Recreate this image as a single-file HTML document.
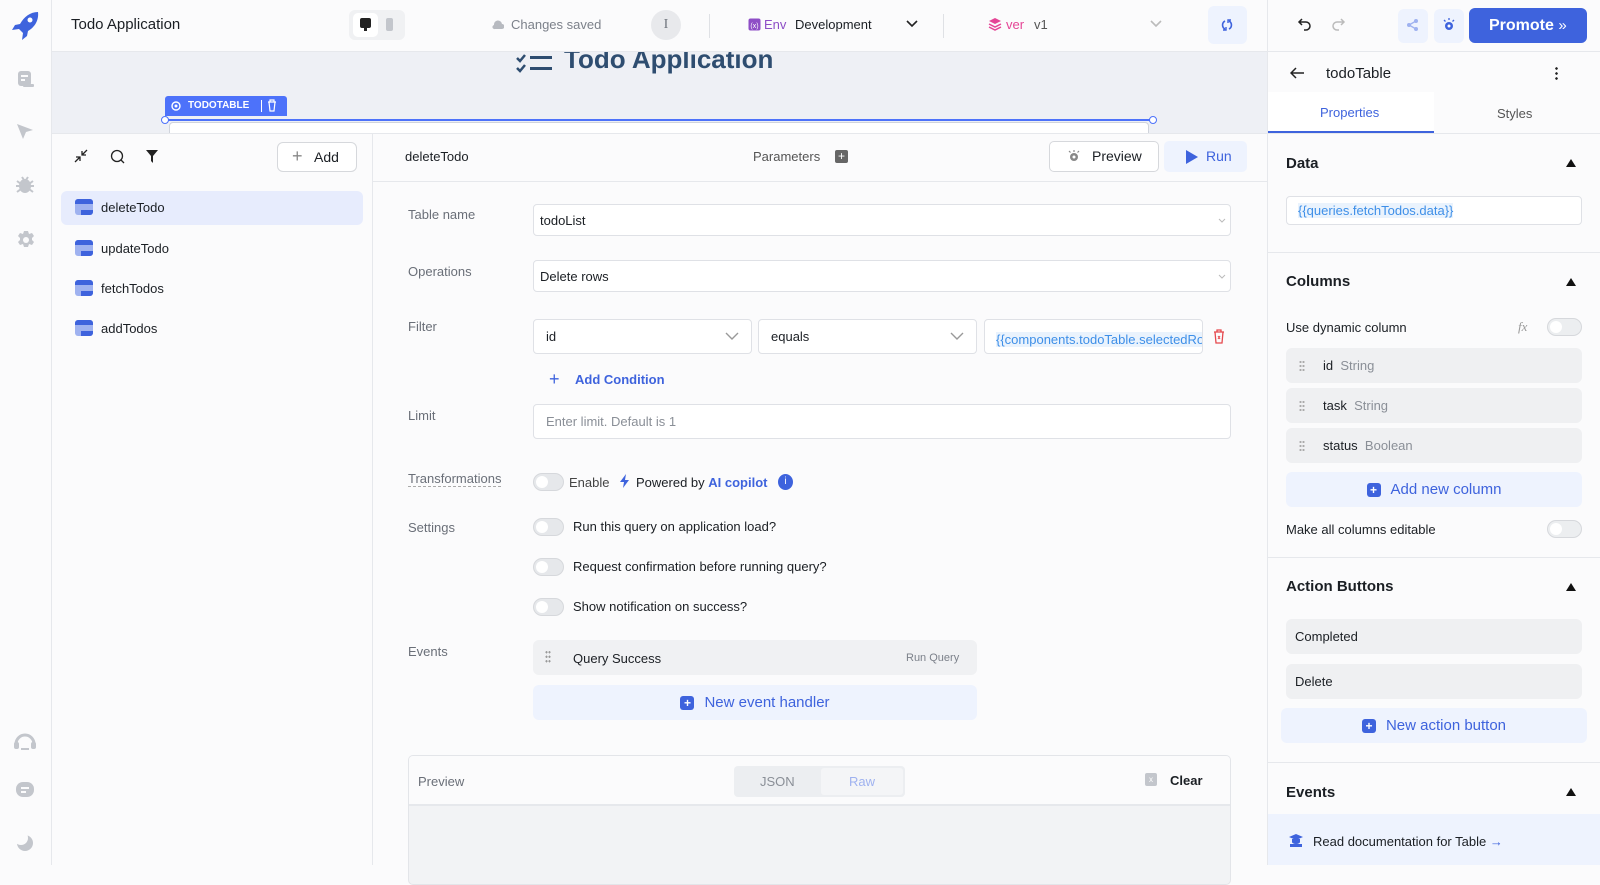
<!DOCTYPE html>
<html><head><meta charset="utf-8"><style>
*{box-sizing:border-box;margin:0;padding:0}
body{width:1600px;height:865px;overflow:hidden;background:#fbfbfc;font-family:"Liberation Sans",sans-serif;color:#1b1f24;position:relative;font-size:13px}
.a{position:absolute}
.lbl{position:absolute;left:408px;color:#6a6f78;font-size:13px}
.inp{position:absolute;background:#fff;border:1px solid #dfe1e6;border-radius:4px;font-size:13px;padding-left:6px;display:flex;align-items:center;color:#1b1f24}
.tog{position:absolute;width:31px;height:18px;border-radius:9px;background:#e6e8eb;border:1px solid #d6d8dc}
.tog:after{content:"";position:absolute;left:2px;top:2px;width:12px;height:12px;border-radius:50%;background:#fff}
.ttl{position:absolute;left:1286px;font-size:15px;font-weight:bold;color:#1b1f24}
.tri{position:absolute;left:1566px;width:0;height:0;border-left:5px solid transparent;border-right:5px solid transparent;border-bottom:8px solid #111}
.hr{position:absolute;left:1267px;width:333px;height:1px;background:#e6e8ec}
.row{position:absolute;left:1286px;width:296px;height:35px;background:#eff0f2;border-radius:6px;font-size:13px;display:flex;align-items:center}
.bluebtn{position:absolute;background:#eef3fe;border-radius:6px;color:#3e63dd;font-size:15px;display:flex;align-items:center;justify-content:center;gap:10px}
.pl{width:14px;height:14px;background:#3e63dd;border-radius:3px;color:#fff;font-size:12px;line-height:14px;text-align:center;font-weight:bold}
.qi{position:absolute;left:75px;width:18px;height:16px;border-radius:3px;background:#9fb2f0;overflow:hidden}
.qi:before{content:"";position:absolute;left:0;top:0;width:18px;height:5px;background:#3e63dd}
.qi:after{content:"";position:absolute;right:0;bottom:0;width:12px;height:5px;background:#3e63dd}
.qt{position:absolute;left:101px;font-size:13px;color:#1b1f24}
</style></head><body>
<!-- left sidebar -->
<div class="a" style="left:0;top:0;width:52px;height:865px;border-right:1px solid #e6e8ec;background:#fbfbfc"></div>
<svg class="a" style="left:10px;top:9px" width="32" height="32" viewBox="0 0 32 32"><path d="M28 3 C20 3 14 8 10 15 L5 16 L2 21 L9 20 L13 24 L12 31 L17 27 L18 22 C25 18 29 11 28 3Z" fill="#3e63dd"/><circle cx="20" cy="11" r="2.5" fill="#fff"/></svg>
<svg class="a" style="left:17px;top:70px" width="18" height="18"><rect x="1" y="1" width="13" height="15" rx="3" fill="#c3c6cc"/><rect x="4" y="5" width="7" height="2" fill="#fbfbfc"/><rect x="4" y="9" width="4" height="2" fill="#fbfbfc"/><rect x="6" y="14" width="11" height="3" rx="1" fill="#c3c6cc"/></svg>
<svg class="a" style="left:16px;top:122px" width="18" height="18"><path d="M1 2 L17 8 L10 10 L7 17Z" fill="#c3c6cc"/></svg>
<svg class="a" style="left:15px;top:175px" width="20" height="20"><ellipse cx="10" cy="11" rx="6" ry="7" fill="#c3c6cc"/><path d="M2 6l4 3M18 6l-4 3M1 11h4M19 11h-4M2 17l4-3M18 17l-4-3M7 2l2 3M13 2l-2 3" stroke="#c3c6cc" stroke-width="2"/></svg>
<svg class="a" style="left:16px;top:230px" width="20" height="20" viewBox="0 0 20 20"><path d="M8 1h4l1 3 3-1 2 3-2 2 0 2 2 2-2 3-3-1-1 3H8l-1-3-3 1-2-3 2-2v-2L2 6l2-3 3 1z" fill="#c3c6cc"/><circle cx="10" cy="10" r="3" fill="#fbfbfc"/></svg>
<svg class="a" style="left:13px;top:730px" width="24" height="22"><path d="M3 14 A9 9 0 0 1 21 14" stroke="#c3c6cc" stroke-width="3" fill="none"/><rect x="1" y="12" width="5" height="7" rx="2" fill="#c3c6cc"/><rect x="18" y="12" width="5" height="7" rx="2" fill="#c3c6cc"/><path d="M8 19h8" stroke="#c3c6cc" stroke-width="2"/></svg>
<svg class="a" style="left:15px;top:781px" width="20" height="18"><rect x="1" y="1" width="18" height="15" rx="7" fill="#c3c6cc"/><rect x="6" y="6" width="8" height="2" fill="#fbfbfc"/><rect x="6" y="10" width="5" height="2" fill="#fbfbfc"/></svg>
<svg class="a" style="left:15px;top:833px" width="20" height="20"><circle cx="10" cy="10" r="8" fill="#c3c6cc"/><circle cx="6" cy="5" r="7" fill="#fbfbfc"/></svg>

<!-- header -->
<div class="a" style="left:52px;top:0;width:1548px;height:52px;background:#fbfbfc;border-bottom:1px solid #e6e8ec"></div>
<div class="a" style="left:71px;top:16px;font-size:15px">Todo Application</div>
<div class="a" style="left:349px;top:10px;width:56px;height:30px;background:#f0f1f3;border-radius:6px"></div>
<div class="a" style="left:353px;top:13px;width:25px;height:24px;background:#fff;border-radius:5px"></div>
<svg class="a" style="left:359px;top:17px" width="14" height="16"><rect x="1" y="1" width="11" height="10" rx="2" fill="#222"/><rect x="5" y="11" width="3" height="3" fill="#222"/></svg>
<div class="a" style="left:386px;top:18px;width:7px;height:13px;background:#c3c6cc;border-radius:2px"></div>
<svg class="a" style="left:492px;top:19px" width="12" height="11"><path d="M3 10h7a2.5 2.5 0 0 0 0-5A4 4 0 0 0 2 6a2 2 0 0 0 1 4z" fill="#b7bac0"/></svg>
<div class="a" style="left:511px;top:17px;font-size:13px;color:#7c818a">Changes saved</div>
<div class="a" style="left:651px;top:10px;width:30px;height:30px;border-radius:50%;background:#e8e9ec;color:#6f747c;text-align:center;line-height:30px;font-size:14px;font-family:'Liberation Serif',serif">I</div>
<div class="a" style="left:709px;top:14px;width:1px;height:24px;background:#dfe1e5"></div>
<svg class="a" style="left:748px;top:18px" width="13" height="13"><rect x="0.5" y="0.5" width="12" height="12" rx="2" fill="#8e4ec6"/><text x="6.5" y="10" font-size="7" fill="#fff" text-anchor="middle" font-family="Liberation Sans">(x)</text></svg>
<div class="a" style="left:764px;top:17px;font-size:13px;color:#8e4ec6">Env</div>
<div class="a" style="left:795px;top:17px;font-size:13px;color:#1b1f24">Development</div>
<svg class="a" style="left:905px;top:19px" width="14" height="10"><path d="M2 2l5 5 5-5" stroke="#222" stroke-width="1.6" fill="none"/></svg>
<div class="a" style="left:943px;top:14px;width:1px;height:24px;background:#dfe1e5"></div>
<svg class="a" style="left:988px;top:17px" width="14" height="15"><path d="M7 1l6 3-6 3-6-3z" fill="#e54596"/><path d="M1 7l6 3 6-3M1 10l6 3 6-3" stroke="#e54596" stroke-width="1.5" fill="none"/></svg>
<div class="a" style="left:1006px;top:17px;font-size:13px;color:#e54596">ver</div>
<div class="a" style="left:1034px;top:17px;font-size:13px;color:#555">v1</div>
<svg class="a" style="left:1149px;top:19px" width="14" height="10"><path d="M2 2l5 5 5-5" stroke="#bbb" stroke-width="1.6" fill="none"/></svg>
<div class="a" style="left:1208px;top:6px;width:39px;height:38px;background:#eef3fe;border-radius:6px"></div>
<svg class="a" style="left:1220px;top:18px" width="14" height="14"><path d="M5 3 A4.5 4.5 0 0 0 5 11M9 3A4.5 4.5 0 0 1 9 11" stroke="#3e63dd" stroke-width="1.6" fill="none"/><path d="M3 12h3v-3M11 2H8v3" stroke="#3e63dd" stroke-width="1.4" fill="none"/></svg>
<div class="a" style="left:1267px;top:0;width:1px;height:865px;background:#e6e8ec"></div>
<svg class="a" style="left:1297px;top:17px" width="16" height="14"><path d="M5 2L2 5l3 3M2 5h7a4 4 0 0 1 0 8H7" stroke="#222" stroke-width="1.5" fill="none"/></svg>
<svg class="a" style="left:1330px;top:17px" width="16" height="14"><path d="M11 2l3 3-3 3M14 5H7a4 4 0 0 0 0 8h2" stroke="#bbb" stroke-width="1.5" fill="none"/></svg>
<div class="a" style="left:1398px;top:9px;width:30px;height:34px;background:#eef3fe;border-radius:6px"></div>
<svg class="a" style="left:1406px;top:18px" width="14" height="14"><circle cx="10" cy="3" r="2" fill="#9fb2f0"/><circle cx="3" cy="7" r="2" fill="#9fb2f0"/><circle cx="10" cy="11" r="2" fill="#9fb2f0"/><path d="M10 3L3 7l7 4" stroke="#9fb2f0" stroke-width="1.3" fill="none"/></svg>
<div class="a" style="left:1434px;top:9px;width:30px;height:34px;background:#eef3fe;border-radius:6px"></div>
<svg class="a" style="left:1442px;top:17px" width="14" height="14"><circle cx="7" cy="9" r="4" fill="#3e63dd"/><circle cx="7" cy="9" r="1.5" fill="#fff"/><path d="M7 1v2M2 3l1.5 1.5M12 3l-1.5 1.5" stroke="#3e63dd" stroke-width="1.3"/></svg>
<div class="a" style="left:1469px;top:8px;width:118px;height:35px;background:#3e63dd;border-radius:6px;color:#fff;font-weight:bold;font-size:16px;line-height:35px;padding-left:20px">Promote <span style="font-weight:normal;font-size:15px">»</span></div>

<!-- canvas -->
<div class="a" style="left:52px;top:52px;width:1215px;height:81px;background:#eef0f5;overflow:hidden">
  <svg class="a" style="left:463px;top:0px" width="40" height="24"><path d="M2 6l3 3 5-6M2 16l3 3 5-6" stroke="#2e4d70" stroke-width="2.5" fill="none"/><rect x="15" y="4" width="22" height="3" fill="#2e4d70"/><rect x="15" y="15" width="22" height="3" fill="#2e4d70"/></svg>
  <div class="a" style="left:512px;top:-8px;font-size:26px;font-weight:bold;color:#2e4d70">Todo Application</div>
  <div class="a" style="left:113px;top:44px;width:122px;height:20px;background:#4d72fa;border-radius:3px 3px 0 0;color:#fff;font-size:10px;font-weight:bold;line-height:20px;padding-left:23px">TODOTABLE</div>
  <svg class="a" style="left:118px;top:48px" width="12" height="12"><circle cx="6" cy="6" r="4" stroke="#fff" stroke-width="1.4" fill="none"/><circle cx="6" cy="6" r="1.5" fill="#fff"/></svg>
  <div class="a" style="left:209px;top:48px;width:1px;height:12px;background:#fff"></div>
  <svg class="a" style="left:215px;top:47px" width="10" height="13"><path d="M1 3h8M3 3V1h4v2M2 3l1 9h4l1-9" stroke="#fff" stroke-width="1.2" fill="none"/></svg>
  <div class="a" style="left:113px;top:67px;width:988px;height:2px;background:#4d72fa"></div>
  <div class="a" style="left:117px;top:70px;width:980px;height:20px;background:#fff;border:1px solid #d0d4dc;border-radius:4px"></div>
  <div class="a" style="left:109px;top:64px;width:8px;height:8px;border-radius:50%;background:#fff;border:1.5px solid #4d72fa"></div>
  <div class="a" style="left:1097px;top:64px;width:8px;height:8px;border-radius:50%;background:#fff;border:1.5px solid #4d72fa"></div>
</div>

<!-- query panel -->
<div class="a" style="left:52px;top:133px;width:1215px;height:732px;background:#fbfbfc;border-top:1px solid #e6e8ec"></div>
<div class="a" style="left:372px;top:133px;width:1px;height:732px;background:#e6e8ec"></div>
<svg class="a" style="left:74px;top:149px" width="14" height="14"><path d="M13 1L8 6M8 2v4h4M1 13l5-5M6 12V8H2" stroke="#222" stroke-width="1.3" fill="none"/></svg>
<svg class="a" style="left:110px;top:149px" width="15" height="15"><circle cx="7" cy="7" r="5.5" stroke="#222" stroke-width="1.3" fill="none"/><path d="M11 11l3 3" stroke="#222" stroke-width="1.3"/></svg>
<svg class="a" style="left:146px;top:150px" width="12" height="13"><path d="M0 0h12L7 6v7L5 11V6z" fill="#222"/></svg>
<div class="a" style="left:277px;top:142px;width:80px;height:30px;border:1px solid #d6d8dc;border-radius:6px;background:#fff;font-size:14px;line-height:28px;padding-left:36px;color:#1b1f24">Add</div>
<div class="a" style="left:292px;top:146px;font-size:18px;color:#888;font-weight:lighter">+</div>
<div class="a" style="left:61px;top:191px;width:302px;height:34px;background:#e7ecfd;border-radius:6px"></div>
<div class="qi" style="top:199px"></div><div class="qt" style="top:200px">deleteTodo</div>
<div class="qi" style="top:240px"></div><div class="qt" style="top:241px">updateTodo</div>
<div class="qi" style="top:280px"></div><div class="qt" style="top:281px">fetchTodos</div>
<div class="qi" style="top:320px"></div><div class="qt" style="top:321px">addTodos</div>

<div class="a" style="left:372px;top:181px;width:895px;height:1px;background:#e6e8ec"></div>
<div class="a" style="left:405px;top:149px;font-size:13px">deleteTodo</div>
<div class="a" style="left:753px;top:149px;font-size:13px;color:#555">Parameters</div>
<div class="a" style="left:835px;top:150px;width:13px;height:13px;background:#666;border-radius:2px;color:#fff;font-size:12px;line-height:13px;text-align:center">+</div>
<div class="a" style="left:1049px;top:141px;width:110px;height:31px;border:1px solid #d6d8dc;border-radius:5px;background:#fff;font-size:14px;line-height:29px;padding-left:42px">Preview</div>
<svg class="a" style="left:1067px;top:150px" width="14" height="12"><circle cx="7" cy="7" r="4" fill="#888"/><circle cx="7" cy="7" r="1.5" fill="#fff"/><path d="M7 0v2M2 1l1.5 1.5M12 1l-1.5 1.5" stroke="#888" stroke-width="1.2"/></svg>
<div class="a" style="left:1164px;top:141px;width:83px;height:31px;background:#eef3fe;border-radius:5px;color:#3e63dd;font-size:14px;line-height:31px;padding-left:42px">Run</div>
<svg class="a" style="left:1186px;top:150px" width="12" height="14"><path d="M0 0L12 7 0 14z" fill="#3e63dd"/></svg>

<div class="lbl" style="top:207px">Table name</div>
<div class="inp" style="left:533px;top:204px;width:698px;height:32px">todoList</div>
<svg class="a" style="left:1218px;top:218px" width="8" height="6"><path d="M1 1l3 3 3-3" stroke="#bbb" fill="none"/></svg>
<div class="lbl" style="top:264px">Operations</div>
<div class="inp" style="left:533px;top:260px;width:698px;height:32px">Delete rows</div>
<svg class="a" style="left:1218px;top:274px" width="8" height="6"><path d="M1 1l3 3 3-3" stroke="#bbb" fill="none"/></svg>
<div class="lbl" style="top:319px">Filter</div>
<div class="inp" style="left:533px;top:319px;width:219px;height:35px;padding-left:12px">id</div>
<svg class="a" style="left:725px;top:332px" width="14" height="9"><path d="M1 1l6 6 6-6" stroke="#999" stroke-width="1.4" fill="none"/></svg>
<div class="inp" style="left:758px;top:319px;width:219px;height:35px;padding-left:12px">equals</div>
<svg class="a" style="left:950px;top:332px" width="14" height="9"><path d="M1 1l6 6 6-6" stroke="#999" stroke-width="1.4" fill="none"/></svg>
<div class="inp" style="left:984px;top:319px;width:219px;height:35px;padding-left:11px;overflow:hidden;white-space:nowrap"><span style="color:#3e8fe8;background:#eaf3fd;margin-top:6px">{{components.todoTable.selectedRow</span></div>
<svg class="a" style="left:1213px;top:329px" width="12" height="15"><path d="M1 3h10M4 3V1h4v2M2 3l1 11h6l1-11" stroke="#e5484d" stroke-width="1.3" fill="none"/><path d="M5 7l2 3M7 7l-2 3" stroke="#e5484d"/></svg>
<div class="a" style="left:549px;top:369px;color:#3e63dd;font-size:18px">+</div>
<div class="a" style="left:575px;top:372px;color:#3e63dd;font-size:13px;font-weight:bold">Add Condition</div>
<div class="lbl" style="top:408px">Limit</div>
<div class="inp" style="left:533px;top:404px;width:698px;height:35px;padding-left:12px;color:#8a8f97">Enter limit. Default is 1</div>
<div class="lbl" style="top:471px;border-bottom:1px dashed #aaa">Transformations</div>
<div class="tog" style="left:533px;top:473px"></div>
<div class="a" style="left:569px;top:475px;font-size:13px;color:#444">Enable</div>
<svg class="a" style="left:620px;top:474px" width="9" height="14"><path d="M6 0L0 8h4l-1 6 6-8H5z" fill="#3e63dd"/></svg>
<div class="a" style="left:636px;top:475px;font-size:13px;color:#1b1f24">Powered by <b style="color:#3e63dd">AI copilot</b></div>
<div class="a" style="left:778px;top:474px;width:15px;height:16px;border-radius:50%;background:#3e63dd;color:#fff;font-size:10px;text-align:center;line-height:16px">i</div>
<div class="lbl" style="top:520px">Settings</div>
<div class="tog" style="left:533px;top:518px"></div><div class="a" style="left:573px;top:519px">Run this query on application load?</div>
<div class="tog" style="left:533px;top:558px"></div><div class="a" style="left:573px;top:559px">Request confirmation before running query?</div>
<div class="tog" style="left:533px;top:598px"></div><div class="a" style="left:573px;top:599px">Show notification on success?</div>
<div class="lbl" style="top:644px">Events</div>
<div class="a" style="left:533px;top:640px;width:444px;height:35px;background:#f0f1f3;border-radius:6px"></div>
<div class="a" style="left:545px;top:650px;width:6px;height:14px;background-image:radial-gradient(circle,#999 1px,transparent 1.2px);background-size:3px 4.5px"></div>
<div class="a" style="left:573px;top:651px;font-size:13px;font-weight:500">Query Success</div>
<div class="a" style="left:906px;top:652px;font-size:11px;color:#7c818a">Run Query</div>
<div class="bluebtn" style="left:533px;top:685px;width:444px;height:35px"><div class="pl">+</div>New event handler</div>
<div class="a" style="left:408px;top:755px;width:823px;height:130px;border:1px solid #e3e5e9;border-radius:5px;background:#f2f3f5;overflow:hidden">
  <div style="height:50px;background:#fbfbfc;border-bottom:2px solid #e6e8ec;position:relative">
    <div class="a" style="left:9px;top:18px;color:#6a6f78;font-size:13px">Preview</div>
    <div class="a" style="left:325px;top:10px;width:171px;height:31px;background:#eceef1;border-radius:4px"></div>
    <div class="a" style="left:351px;top:18px;color:#8a8f97;font-size:13px">JSON</div>
    <div class="a" style="left:412px;top:12px;width:82px;height:27px;background:#f4f5f7;border-radius:3px;color:#9fb2f0;font-size:13px;text-align:center;line-height:27px">Raw</div>
    <div class="a" style="left:736px;top:17px;width:12px;height:13px;background:#c3c6cc;border-radius:2px;color:#fff;font-size:8px;text-align:center;line-height:13px">x</div>
    <div class="a" style="left:761px;top:17px;font-size:13px;font-weight:bold">Clear</div>
  </div>
</div>

<!-- right panel -->
<div class="a" style="left:1268px;top:52px;width:332px;height:813px;background:#fbfbfc"></div>
<svg class="a" style="left:1290px;top:67px" width="14" height="12"><path d="M6 1L1 6l5 5M1 6h13" stroke="#222" stroke-width="1.5" fill="none"/></svg>
<div class="a" style="left:1326px;top:65px;font-size:15px">todoTable</div>
<div class="a" style="left:1555px;top:66px;width:3px;height:14px;background-image:radial-gradient(circle,#222 1.2px,transparent 1.4px);background-size:3px 5px"></div>
<div class="a" style="left:1268px;top:92px;width:166px;height:41px;background:#fff"></div>
<div class="a" style="left:1268px;top:131px;width:166px;height:2px;background:#3e63dd"></div>
<div class="hr" style="top:133px"></div>
<div class="a" style="left:1320px;top:105px;color:#3e63dd;font-size:13px">Properties</div>
<div class="a" style="left:1497px;top:106px;color:#555;font-size:13px">Styles</div>
<div class="ttl" style="top:155px">Data</div><div class="tri" style="top:159px"></div>
<div class="inp" style="left:1286px;top:196px;width:296px;height:29px;padding-left:11px"><span style="color:#3e8fe8;background:#eaf3fd">{{queries.fetchTodos.data}}</span></div>
<div class="hr" style="top:252px"></div>
<div class="ttl" style="top:273px">Columns</div><div class="tri" style="top:278px"></div>
<div class="a" style="left:1286px;top:320px;font-size:13px">Use dynamic column</div>
<div class="a" style="left:1518px;top:319px;font-size:13px;color:#999;font-style:italic;font-family:'Liberation Serif',serif">fx</div>
<div class="tog" style="left:1547px;top:318px;width:35px;background:#eceef0"></div>
<div class="row" style="top:348px"><span style="width:6px;height:12px;margin:0 18px 0 13px;background-image:radial-gradient(circle,#aaa 1px,transparent 1.2px);background-size:3px 4px"></span>id&nbsp;&nbsp;<span style="color:#8a8f97">String</span></div>
<div class="row" style="top:388px"><span style="width:6px;height:12px;margin:0 18px 0 13px;background-image:radial-gradient(circle,#aaa 1px,transparent 1.2px);background-size:3px 4px"></span>task&nbsp;&nbsp;<span style="color:#8a8f97">String</span></div>
<div class="row" style="top:428px"><span style="width:6px;height:12px;margin:0 18px 0 13px;background-image:radial-gradient(circle,#aaa 1px,transparent 1.2px);background-size:3px 4px"></span>status&nbsp;&nbsp;<span style="color:#8a8f97">Boolean</span></div>
<div class="bluebtn" style="left:1286px;top:472px;width:296px;height:35px;font-weight:500"><div class="pl">+</div>Add new column</div>
<div class="a" style="left:1286px;top:522px;font-size:13px">Make all columns editable</div>
<div class="tog" style="left:1547px;top:520px;width:35px;background:#eceef0"></div>
<div class="hr" style="top:557px"></div>
<div class="ttl" style="top:578px">Action Buttons</div><div class="tri" style="top:583px"></div>
<div class="row" style="top:619px;padding-left:9px">Completed</div>
<div class="row" style="top:664px;padding-left:9px">Delete</div>
<div class="bluebtn" style="left:1281px;top:708px;width:306px;height:35px"><div class="pl">+</div>New action button</div>
<div class="hr" style="top:762px"></div>
<div class="ttl" style="top:784px">Events</div><div class="tri" style="top:788px"></div>
<div class="a" style="left:1268px;top:814px;width:332px;height:51px;background:#eef3fe"></div>
<svg class="a" style="left:1288px;top:833px" width="16" height="15"><path d="M1 4l7-3 7 3-7 3z" fill="#3e63dd"/><path d="M4 6v3a4 2 0 0 0 8 0V6" fill="#3e63dd"/><rect x="2" y="11" width="12" height="3" fill="#3e63dd"/></svg>
<div class="a" style="left:1313px;top:834px;font-size:13px;font-weight:500">Read documentation for Table <span style="color:#3e63dd">→</span></div>
</body></html>
